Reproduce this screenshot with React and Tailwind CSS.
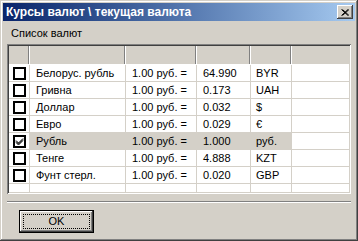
import React from "react";

const rows = [
  { name: "Белорус. рубль", rate: "64.990", code: "BYR", checked: false },
  { name: "Гривна", rate: "0.173", code: "UAH", checked: false },
  { name: "Доллар", rate: "0.032", code: "$", checked: false },
  { name: "Евро", rate: "0.029", code: "€", checked: false },
  { name: "Рубль", rate: "1.000", code: "руб.", checked: true, sel: true },
  { name: "Тенге", rate: "4.888", code: "KZT", checked: false },
  { name: "Фунт стерл.", rate: "0.020", code: "GBP", checked: false },
];

function Check({ checked }) {
  return (
    <div className="w-[13px] h-[13px] border-2 border-black bg-white flex items-center justify-center">
      {checked && (
        <svg width="9" height="9" viewBox="0 0 9 9">
          <path d="M1 3.5 L3.5 6 L8 1.5 M1 4.5 L3.5 7 L8 2.5 M1 5.5 L3.5 8 L8 3.5" stroke="black" strokeWidth="1" fill="none" />
        </svg>
      )}
    </div>
  );
}

export default function App() {
  const font = { fontFamily: '"Liberation Sans", Arial, sans-serif' };
  return (
    <div
      className="w-[358px] h-[241px] bg-[#d4d0c8] p-[3px] flex flex-col text-[11px] text-black shadow-[inset_-1px_-1px_0_#404040,inset_1px_1px_0_#d4d0c8,inset_-2px_-2px_0_#808080,inset_2px_2px_0_#ffffff]"
      style={font}
    >
      <div className="h-[18px] flex items-center justify-between pl-[3px] pr-[2px] bg-gradient-to-r from-[#0a246a] to-[#a6caf0]">
        <span className="text-white font-bold text-[12px] leading-none">Курсы валют \ текущая валюта</span>
        <div className="w-[16px] h-[14px] bg-[#d4d0c8] flex items-center justify-center shadow-[inset_-1px_-1px_0_#404040,inset_1px_1px_0_#ffffff,inset_-2px_-2px_0_#808080]">
          <svg width="8" height="7" viewBox="0 0 8 7">
            <path d="M0.5 0.5 L7 6.5 M1.5 0.5 L8 6.5 M7 0.5 L0.5 6.5 M8 0.5 L1.5 6.5" stroke="black" strokeWidth="1" />
          </svg>
        </div>
      </div>
      <div className="h-[23px] flex items-center pl-[8px] pt-[1px]">Список валют</div>
      <div className="mx-[4px] h-[150px] p-[2px] bg-white shadow-[inset_1px_1px_0_#808080,inset_-1px_-1px_0_#ffffff,inset_2px_2px_0_#404040,inset_-2px_-2px_0_#d4d0c8] overflow-hidden flex flex-col">
        <div className="flex h-[18px] shrink-0 bg-[#d4d0c8]">
          <div className="w-[21px] border-r border-[#ffffff] shadow-[inset_-1px_0_0_#808080]" />
          <div className="w-[96px] border-r border-[#ffffff] shadow-[inset_-1px_0_0_#808080]" />
          <div className="w-[71px] border-r border-[#ffffff] shadow-[inset_-1px_0_0_#808080]" />
          <div className="w-[54px] border-r border-[#ffffff] shadow-[inset_-1px_0_0_#808080]" />
          <div className="w-[41px] border-r border-[#ffffff] shadow-[inset_-1px_0_0_#808080]" />
          <div className="flex-1" />
        </div>
        <div className="h-px bg-white shrink-0" />
        {rows.map((r) => (
          <div key={r.name} className="flex h-[17px] shrink-0 border-b border-[#d4d0c8]">
            <div className="w-[21px] border-r border-[#d4d0c8] flex items-center pl-[4px] bg-white">
              <Check checked={r.checked} />
            </div>
            <div className={`w-[96px] border-r border-[#d4d0c8] flex items-center pl-[6px] ${r.sel ? "bg-[#d4d0c8]" : "bg-white"}`}>{r.name}</div>
            <div className={`w-[71px] border-r border-[#d4d0c8] flex items-center pl-[6px] ${r.sel ? "bg-[#d4d0c8]" : "bg-white"}`}>1.00 руб. =</div>
            <div className={`w-[54px] border-r border-[#d4d0c8] flex items-center pl-[6px] ${r.sel ? "bg-[#d4d0c8]" : "bg-white"}`}>{r.rate}</div>
            <div className={`w-[41px] border-r border-[#d4d0c8] flex items-center pl-[5px] ${r.sel ? "bg-[#d4d0c8]" : "bg-white"}`}>{r.code}</div>
            <div className="flex-1 bg-white" />
          </div>
        ))}
        <div className="flex flex-1">
          <div className="w-[21px] border-r border-[#d4d0c8]" />
          <div className="w-[96px] border-r border-[#d4d0c8]" />
          <div className="w-[71px] border-r border-[#d4d0c8]" />
          <div className="w-[54px] border-r border-[#d4d0c8]" />
          <div className="w-[41px] border-r border-[#d4d0c8]" />
          <div className="flex-1" />
        </div>
      </div>
      <div className="mx-[4px] mt-[7px] h-[2px] border-t border-[#808080] border-b border-b-white" />
      <div className="pl-[16px] pt-[7px]">
        <div className="w-[75px] h-[23px] border border-black bg-[#d4d0c8] shadow-[inset_-1px_-1px_0_#404040,inset_1px_1px_0_#ffffff,inset_-2px_-2px_0_#808080] p-[3px]">
          <div className="w-full h-full border border-dotted border-black flex items-center justify-center">OK</div>
        </div>
      </div>
    </div>
  );
}
